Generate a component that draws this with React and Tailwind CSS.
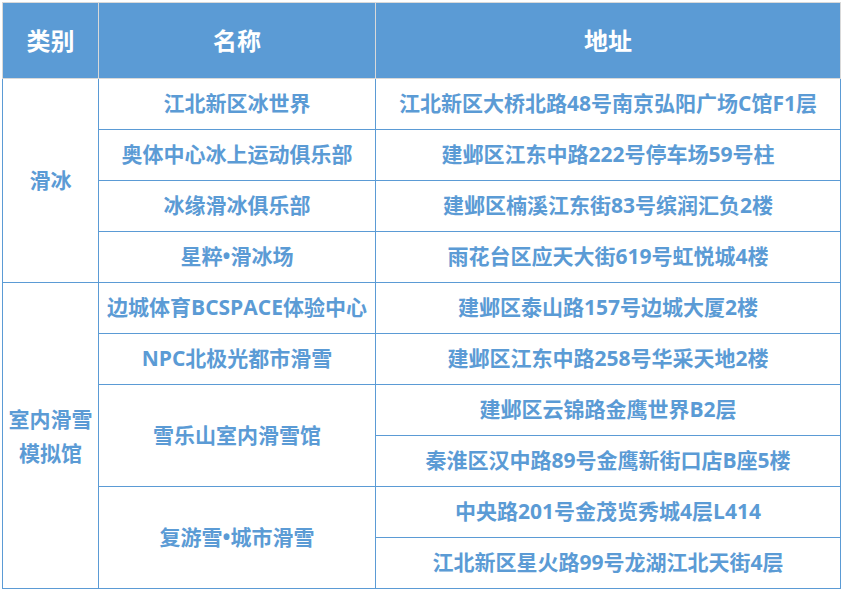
const rows = [
    { cat: "滑冰", catSpan: 4, name: "江北新区冰世界", addr: "江北新区大桥北路48号南京弘阳广场C馆F1层" },
    { name: "奥体中心冰上运动俱乐部", addr: "建邺区江东中路222号停车场59号柱" },
    { name: "冰缘滑冰俱乐部", addr: "建邺区楠溪江东街83号缤润汇负2楼" },
    { name: "星粹•滑冰场", addr: "雨花台区应天大街619号虹悦城4楼" },
    { cat: ["室内滑雪", "模拟馆"], catSpan: 6, name: "边城体育BCSPACE体验中心", addr: "建邺区泰山路157号边城大厦2楼" },
    { name: "NPC北极光都市滑雪", addr: "建邺区江东中路258号华采天地2楼" },
    { name: "雪乐山室内滑雪馆", nameSpan: 2, addr: "建邺区云锦路金鹰世界B2层" },
    { addr: "秦淮区汉中路89号金鹰新街口店B座5楼" },
    { name: "复游雪•城市滑雪", nameSpan: 2, addr: "中央路201号金茂览秀城4层L414" },
    { addr: "江北新区星火路99号龙湖江北天街4层" },
];

export default function App() {
    const td = "border border-[#5b9bd5] text-center align-middle p-0";
    return (
        <div className="w-[842px] h-[592px] bg-white pt-[2px] pl-[2px] font-['Open_Sans','Noto_Sans_CJK_SC',sans-serif] font-bold text-[#5b9bd5]">
            <table className="border-collapse table-fixed w-[838px]">
                <colgroup>
                    <col className="w-[96px]" />
                    <col className="w-[277px]" />
                    <col className="w-[465px]" />
                </colgroup>
                <thead>
                    <tr className="h-[76px]">
                        {["类别", "名称", "地址"].map((h) => (
                            <th key={h} className="border border-[#d9d9d9] bg-[#5b9bd5] text-white text-[24px] font-bold p-0">
                                {h}
                            </th>
                        ))}
                    </tr>
                </thead>
                <tbody>
                    {rows.map((r, i) => (
                        <tr key={i} className="h-[51px] text-[21px]">
                            {r.cat && (
                                <td rowSpan={r.catSpan} className={td}>
                                    {Array.isArray(r.cat)
                                        ? r.cat.map((l) => <div key={l} className="leading-[34px]">{l}</div>)
                                        : r.cat}
                                </td>
                            )}
                            {r.name && (
                                <td rowSpan={r.nameSpan || 1} className={`${td} whitespace-nowrap`}>
                                    {r.name}
                                </td>
                            )}
                            <td className={`${td} whitespace-nowrap`}>{r.addr}</td>
                        </tr>
                    ))}
                </tbody>
            </table>
        </div>
    );
}
